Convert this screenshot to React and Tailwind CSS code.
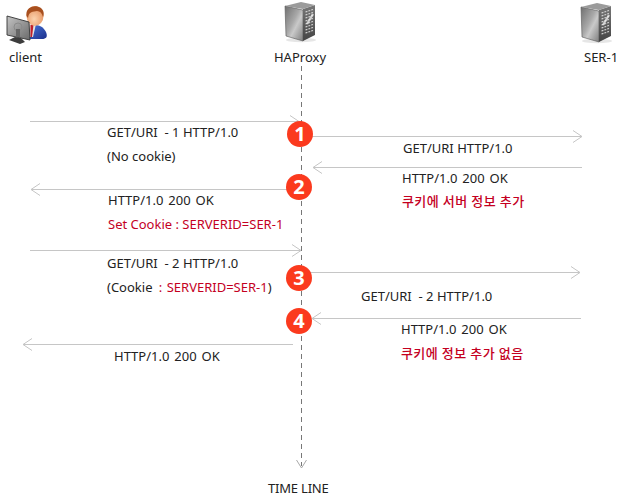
const font = { fontFamily: '"Noto Sans", "Noto Sans CJK KR", sans-serif' };

function Server({ id }) {
  return (
    <svg viewBox="0 0 34 42" className="w-[34px] h-[42px]">
      <defs>
        <linearGradient id={`${id}-side`} x1="0" y1="0" x2="1" y2="1">
          <stop offset="0" stopColor="#6f6f6f" />
          <stop offset="0.45" stopColor="#a9a9a9" />
          <stop offset="0.6" stopColor="#c9c9c9" />
          <stop offset="1" stopColor="#7d7d7d" />
        </linearGradient>
        <linearGradient id={`${id}-front`} x1="0" y1="0" x2="0" y2="1">
          <stop offset="0" stopColor="#777" />
          <stop offset="1" stopColor="#444" />
        </linearGradient>
      </defs>
      <ellipse cx="18" cy="39" rx="15" ry="2.2" fill="#e6e6e6" />
      <path d="M2 5 L20 9 L20 40 L3 35 Z" fill={`url(#${id}-side)`} stroke="#555" strokeWidth="0.6" />
      <path d="M20 8 L32 4 L32 34 L20 40 Z" fill={`url(#${id}-front)`} />
      <path d="M2 5 L18 1 L32 4 L20 8 Z" fill="#9b9b9b" />
      <path d="M22.5 11 L30 8.5 M22.5 14 L30 11.5 M22.5 17 L30 14.5 M22.5 20 L30 17.5 M22.5 23 L30 20.5 M22.5 26 L30 23.5 M22.5 29 L30 26.5 M22.5 32 L30 29.5" stroke="#d4d4d4" strokeWidth="1.1" strokeDasharray="2 1" />
      <path d="M24 23 L30 13" stroke="#f4f4f4" strokeWidth="2.2" opacity="0.75" />
    </svg>
  );
}

function ClientIcon() {
  return (
    <svg viewBox="0 0 42 40" className="w-[42px] h-[40px] -ml-[3px]">
      <defs>
        <linearGradient id="suit" x1="0" y1="0" x2="1" y2="1">
          <stop offset="0" stopColor="#4a78dc" />
          <stop offset="1" stopColor="#1b2f8c" />
        </linearGradient>
        <radialGradient id="face" cx="0.45" cy="0.65" r="0.6">
          <stop offset="0" stopColor="#fbd3ae" />
          <stop offset="1" stopColor="#e79664" />
        </radialGradient>
        <linearGradient id="screen" x1="0" y1="0" x2="1" y2="1">
          <stop offset="0" stopColor="#c4c4c4" />
          <stop offset="1" stopColor="#6a6a6a" />
        </linearGradient>
      </defs>
      <path d="M22 21 C28 18 37 20 40 27 C42 32 40 34 36 34 L22 34 Z" fill="url(#suit)" />
      <path d="M23 19 L30 19 L27 32 L23 32 Z" fill="#e2e2e2" />
      <path d="M24.5 20 L27.5 20 L26 32 L24.5 32 Z" fill="#c2202a" />
      <ellipse cx="29" cy="11" rx="8.5" ry="10" fill="url(#face)" />
      <path d="M20.5 11 C19 2 29 -1 35 3 C38.5 6 38 10 37 12 C36 8 34 6 31 6 C27 7 23 6 22 13 Z" fill="#a8501f" />
      <path d="M1 11 L23 17 L24 35 L1 30 Z" fill="url(#screen)" stroke="#333" strokeWidth="0.9" />
      <circle cx="12" cy="22" r="4" fill="none" stroke="#8a8a8a" strokeWidth="1" />
      <path d="M10 24 L14 24 L14 33 L10 32 Z" fill="#666" />
      <path d="M9 32 L15 33 L19 37 L14 39 L3 35 Z" fill="#3c3c3c" />
    </svg>
  );
}

function Badge({ className, children }) {
  return (
    <div className={`absolute w-[26px] h-[26px] rounded-full bg-[#fb3a1e] text-white flex items-center justify-center text-[20px] font-bold leading-none ${className}`}>
      {children}
    </div>
  );
}

// a block of text lines pinned next to its arrow
function Note({ className, children }) {
  return <div className={`absolute flex flex-col whitespace-pre text-[13px] leading-[16px] text-[#222] ${className}`}>{children}</div>;
}

function Red({ children }) {
  return <span className="text-[#c4001f]">{children}</span>;
}

function Korean({ children }) {
  return <span className="text-[#c4001f] font-medium tracking-[0.4px]">{children}</span>;
}

function Status() {
  return <span className="[word-spacing:1.5px]">HTTP/1.0 200 OK</span>;
}

function Arrow({ x1, x2, y }) {
  const d = x2 > x1 ? -1 : 1;
  return (
    <g fill="none" stroke="#c6c6c6" strokeWidth="1">
      <path d={`M${x1} ${y}H${x2}`} />
      <path d={`M${x2 + d * 9} ${y - 6}L${x2} ${y}L${x2 + d * 9} ${y + 6}`} />
    </g>
  );
}

export default function App() {
  return (
    <div className="relative w-[630px] h-[503px] bg-white overflow-hidden" style={font}>
      <div className="absolute left-[9px] top-[5px] flex flex-col gap-[4px] text-[13px] leading-[16px] text-[#222]">
        <ClientIcon />
        <span>client</span>
      </div>
      <div className="absolute left-[274px] top-[1px] w-[52px] flex flex-col items-center gap-[6px] text-[13px] leading-[16px] text-[#222]">
        <Server id="ha" />
        <span>HAProxy</span>
      </div>
      <div className="absolute left-[579px] top-[2px] flex flex-col gap-[5px] text-[13px] leading-[16px] text-[#222]">
        <Server id="ser" />
        <span className="ml-[5px]">SER-1</span>
      </div>

      <svg className="absolute left-0 top-0" width="630" height="503">
        <path d="M301.5 66V466" stroke="#777" strokeDasharray="5 4" fill="none" />
        <path d="M296.5 460L301.5 468L306.5 460" stroke="#aaa" fill="none" />
        <Arrow x1={30} x2={299} y={121.5} />
        <Arrow x1={312} x2={582} y={136.5} />
        <Arrow x1={582} x2={313} y={167.5} />
        <Arrow x1={290} x2={31} y={189.5} />
        <Arrow x1={30} x2={301} y={250.5} />
        <Arrow x1={310} x2={580} y={272.5} />
        <Arrow x1={581} x2={312} y={318.5} />
        <Arrow x1={293} x2={23} y={344.5} />
      </svg>

      <Badge className="left-[287px] top-[121px]">1</Badge>
      <Badge className="left-[286px] top-[174px]">2</Badge>
      <Badge className="left-[286px] top-[265px]">3</Badge>
      <Badge className="left-[286px] top-[308px]">4</Badge>

      <Note className="left-[107px] top-[124px] gap-[8px]">
        <span>GET/URI  - 1 HTTP/1.0</span>
        <span>(No cookie)</span>
      </Note>
      <Note className="left-[108px] top-[192px] gap-[8px]">
        <Status />
        <Red>Set Cookie : SERVERID=SER-1</Red>
      </Note>

      <Note className="left-[403px] top-[140px]">GET/URI HTTP/1.0</Note>
      <Note className="left-[402px] top-[170px] gap-[7px]">
        <Status />
        <Korean>쿠키에 서버 정보 추가</Korean>
      </Note>

      <Note className="left-[107px] top-[255px] gap-[8px]">
        <span>GET/URI  - 2 HTTP/1.0</span>
        <span>
          (Cookie <span className="ml-[3px] [word-spacing:1px]"><Red>: SERVERID=SER-1</Red></span>)
        </span>
      </Note>
      <Note className="left-[114px] top-[348px]">
        <Status />
      </Note>

      <Note className="left-[361px] top-[288px]">GET/URI  - 2 HTTP/1.0</Note>
      <Note className="left-[401px] top-[321px] gap-[8px]">
        <Status />
        <Korean>쿠키에 정보 추가 없음</Korean>
      </Note>

      <Note className="left-[268px] top-[480px] tracking-[-0.2px]">TIME LINE</Note>
    </div>
  );
}
